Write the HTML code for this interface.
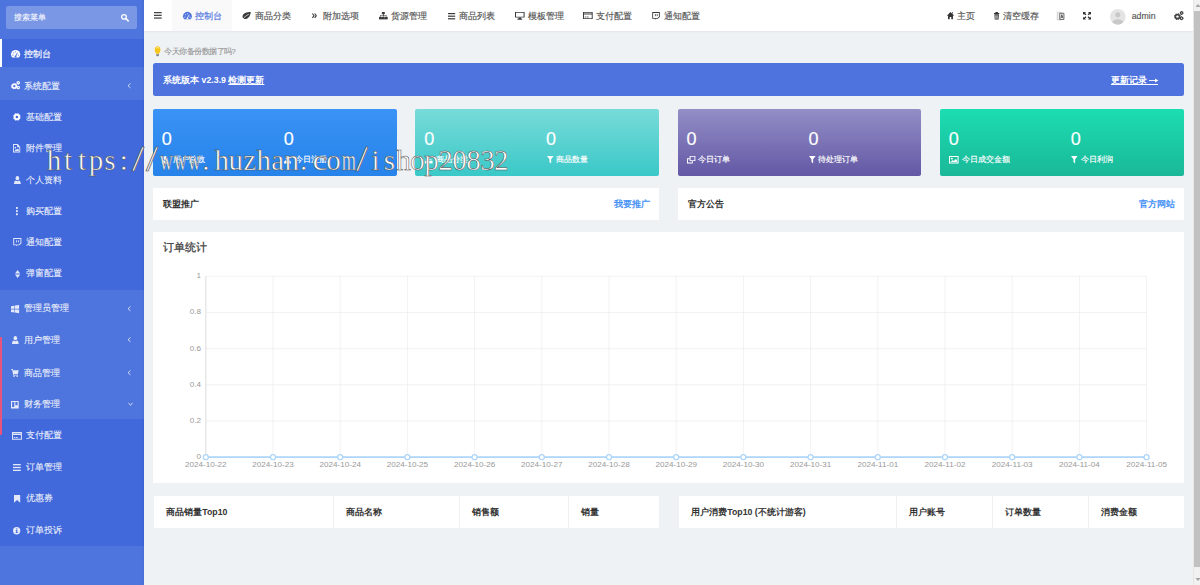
<!DOCTYPE html>
<html><head><meta charset="utf-8"><style>
*{margin:0;padding:0;box-sizing:border-box}
html,body{width:1200px;height:585px;overflow:hidden;background:#eff2f5;font-family:"Liberation Sans",sans-serif}
.a{position:absolute}
svg{display:block;overflow:visible}
.t{position:absolute;white-space:nowrap;line-height:12px}
</style></head><body>
<div class="a" style="left:0px;top:0px;width:143.75px;height:585px;background:#4e75dd"></div>
<div class="a" style="left:0px;top:39.2px;width:143.75px;height:28px;background:#4169db"></div>
<div class="a" style="left:0px;top:39.2px;width:2px;height:28px;background:#fff"></div>
<div class="a" style="left:0px;top:99.9px;width:143.75px;height:190.1px;background:#4169db"></div>
<div class="a" style="left:0px;top:418.9px;width:143.75px;height:127.3px;background:#4169db"></div>
<div class="a" style="left:142.3px;top:0px;width:1.45px;height:585px;background:rgba(30,50,140,0.07)"></div>
<div class="a" style="left:0px;top:336.7px;width:1.6px;height:98.8px;background:#e8547c;border-radius:0 1px 1px 0"></div>
<div class="a" style="left:5.7px;top:6.1px;width:131.3px;height:23.4px;background:rgba(255,255,255,0.25);border-radius:2px"></div>
<div class="t" style="left:14.4px;top:11.600000000000001px;font-size:8.1px;color:#eef2fc;font-weight:normal;-webkit-text-stroke:0.15px #eef2fc;">搜索菜单</div>
<svg class="a" style="left:120.7px;top:13.7px;color:#fff" width="8.0" height="7.6" viewBox="0.5 0.5 15.5 15.5" preserveAspectRatio="none" fill="#fff"><circle cx="6.3" cy="6.3" r="4.6" fill="none" stroke="currentColor" stroke-width="2.6"/><path d="M9.8 9.8 L14.5 14.5" stroke="currentColor" stroke-width="3" stroke-linecap="round"/></svg>
<svg class="a" style="left:10.5px;top:50.0px;color:#fff" width="9.2" height="7.4" viewBox="0 0.5 16 13.5" preserveAspectRatio="none" fill="#fff"><path d="M2.2 14 A8 8 0 1 1 13.8 14 Z"/><path d="M8 12 L11 5.5" stroke="#4169db" stroke-width="1.5" fill="none"/><circle cx="8" cy="12.2" r="1.6" fill="#4169db"/><circle cx="3.4" cy="9.8" r="1" fill="#4169db"/><circle cx="4.8" cy="5.6" r="1" fill="#4169db"/><circle cx="8" cy="3.8" r="1" fill="#4169db"/><circle cx="12.6" cy="9.8" r="1" fill="#4169db"/></svg>
<div class="t" style="left:23.8px;top:47.6px;font-size:8.75px;color:#fff;font-weight:normal;-webkit-text-stroke:0.15px #fff;">控制台</div>
<svg class="a" style="left:10.5px;top:81.3px;color:rgba(255,255,255,0.85)" width="9.2" height="8.4" viewBox="0 0.2 16.1 15.7" preserveAspectRatio="none" fill="rgba(255,255,255,0.85)"><polygon points="10.09,10.01 11.43,11.21 11.04,12.28 9.25,12.36 8.68,12.98 8.78,14.77 7.75,15.26 6.43,14.05 5.59,14.09 4.39,15.43 3.32,15.04 3.24,13.25 2.62,12.68 0.83,12.78 0.34,11.75 1.55,10.43 1.51,9.59 0.17,8.39 0.56,7.32 2.35,7.24 2.92,6.62 2.82,4.83 3.85,4.34 5.17,5.55 6.01,5.51 7.21,4.17 8.28,4.56 8.36,6.35 8.98,6.92 10.77,6.82 11.26,7.85 10.05,9.17"/><circle cx="5.8" cy="9.8" r="4.99"/><circle cx="5.8" cy="9.8" r="2.1" fill="#4e75dd"/><polygon points="15.21,3.76 15.92,4.69 15.53,5.49 14.36,5.49 13.81,5.86 13.36,6.93 12.48,6.99 11.89,5.98 11.30,5.69 10.14,5.84 9.65,5.10 10.23,4.09 10.19,3.44 9.48,2.51 9.87,1.71 11.04,1.71 11.59,1.34 12.04,0.27 12.92,0.21 13.51,1.22 14.10,1.51 15.26,1.36 15.75,2.10 15.17,3.11"/><circle cx="12.7" cy="3.6" r="2.92"/><circle cx="12.7" cy="3.6" r="1.0" fill="#4e75dd"/><polygon points="15.21,12.66 15.92,13.59 15.53,14.39 14.36,14.39 13.81,14.76 13.36,15.83 12.48,15.89 11.89,14.88 11.30,14.59 10.14,14.74 9.65,14.00 10.23,12.99 10.19,12.34 9.48,11.41 9.87,10.61 11.04,10.61 11.59,10.24 12.04,9.17 12.92,9.11 13.51,10.12 14.10,10.41 15.26,10.26 15.75,11.00 15.17,12.01"/><circle cx="12.7" cy="12.5" r="2.92"/><circle cx="12.7" cy="12.5" r="1.0" fill="#4e75dd"/></svg>
<div class="t" style="left:23.9px;top:79.5px;font-size:8.75px;color:rgba(255,255,255,0.85);font-weight:normal;-webkit-text-stroke:0.15px rgba(255,255,255,0.85);">系统配置</div>
<svg class="a" style="left:127.4px;top:82.8px;color:rgba(255,255,255,0.85)" width="4.0" height="5.4" viewBox="0 0 16 16" preserveAspectRatio="none" fill="rgba(255,255,255,0.85)"><path d="M14 1.5 L4 8 L14 14.5" stroke="currentColor" stroke-width="2.8" fill="none"/></svg>
<svg class="a" style="left:13.0px;top:113.1px;color:rgba(255,255,255,0.85)" width="7.8" height="7.8" viewBox="0 0 16 16" preserveAspectRatio="none" fill="rgba(255,255,255,0.85)"><polygon points="13.91,8.29 15.76,9.94 15.23,11.42 12.75,11.53 11.98,12.39 12.11,14.86 10.70,15.53 8.87,13.86 7.71,13.91 6.06,15.76 4.58,15.23 4.47,12.75 3.61,11.98 1.14,12.11 0.47,10.70 2.14,8.87 2.09,7.71 0.24,6.06 0.77,4.58 3.25,4.47 4.02,3.61 3.89,1.14 5.30,0.47 7.13,2.14 8.29,2.09 9.94,0.24 11.42,0.77 11.53,3.25 12.39,4.02 14.86,3.89 15.53,5.30 13.86,7.13"/><circle cx="8" cy="8" r="6.88"/><circle cx="8" cy="8" r="2.6" fill="#4169db"/></svg>
<div class="t" style="left:25.8px;top:110.6px;font-size:8.75px;color:rgba(255,255,255,0.85);font-weight:normal;-webkit-text-stroke:0.15px rgba(255,255,255,0.85);">基础配置</div>
<svg class="a" style="left:13.3px;top:144.0px;color:rgba(255,255,255,0.85)" width="7.2" height="8.5" viewBox="0 0 15 16" preserveAspectRatio="none" fill="rgba(255,255,255,0.85)"><path d="M0 0 H10 L15 5 V16 H0 Z M1.8 1.8 V14.2 H13.2 V6.3 H8.7 V1.8 Z" fill-rule="evenodd"/><circle cx="4.8" cy="7" r="1.6"/><path d="M3 13 L6.5 9.5 L8 11 L10 8.5 L12 10.5 V13 Z"/></svg>
<div class="t" style="left:25.8px;top:142.1px;font-size:8.75px;color:rgba(255,255,255,0.85);font-weight:normal;-webkit-text-stroke:0.15px rgba(255,255,255,0.85);">附件管理</div>
<svg class="a" style="left:13.5px;top:176.0px;color:rgba(255,255,255,0.85)" width="6.8" height="8.0" viewBox="0 0 16 16" preserveAspectRatio="none" fill="rgba(255,255,255,0.85)"><circle cx="8" cy="4.3" r="4.3"/><path d="M0 16 C0 11 2.5 9.2 4.5 9 Q8 11.5 11.5 9 C13.5 9.2 16 11 16 16 Z"/></svg>
<div class="t" style="left:25.8px;top:173.6px;font-size:8.75px;color:rgba(255,255,255,0.85);font-weight:normal;-webkit-text-stroke:0.15px rgba(255,255,255,0.85);">个人资料</div>
<svg class="a" style="left:16.2px;top:207.1px;color:rgba(255,255,255,0.85)" width="1.8" height="8.2" viewBox="0 0 4 16" preserveAspectRatio="none" fill="rgba(255,255,255,0.85)"><rect x="0" y="0" width="4" height="3.8"/><rect x="0" y="6.1" width="4" height="3.8"/><rect x="0" y="12.2" width="4" height="3.8"/></svg>
<div class="t" style="left:25.8px;top:204.79999999999998px;font-size:8.75px;color:rgba(255,255,255,0.85);font-weight:normal;-webkit-text-stroke:0.15px rgba(255,255,255,0.85);">购买配置</div>
<svg class="a" style="left:12.9px;top:237.7px;color:rgba(255,255,255,0.85)" width="8.4" height="8.3" viewBox="0 0 16 16" preserveAspectRatio="none" fill="rgba(255,255,255,0.85)"><path d="M0.5 0 H16 V10.5 L12 14 H8.5 L6 16 V14 H0.5 Z M2.3 1.8 V12.3 H7.3 V13.3 L8.3 12.3 H11.3 L14.2 9.8 V1.8 Z" fill-rule="evenodd"/><rect x="6" y="4.3" width="1.6" height="4.2"/><rect x="9.8" y="4.3" width="1.6" height="4.2"/></svg>
<div class="t" style="left:25.8px;top:236.2px;font-size:8.75px;color:rgba(255,255,255,0.85);font-weight:normal;-webkit-text-stroke:0.15px rgba(255,255,255,0.85);">通知配置</div>
<svg class="a" style="left:14.5px;top:269.8px;color:rgba(255,255,255,0.85)" width="5.2" height="8.0" viewBox="0 0 16 16" preserveAspectRatio="none" fill="rgba(255,255,255,0.85)"><path d="M8 0 L16 6.8 H0 Z M8 16 L16 9.2 H0 Z"/></svg>
<div class="t" style="left:25.8px;top:267.40000000000003px;font-size:8.75px;color:rgba(255,255,255,0.85);font-weight:normal;-webkit-text-stroke:0.15px rgba(255,255,255,0.85);">弹窗配置</div>
<svg class="a" style="left:11.1px;top:304.5px;color:rgba(255,255,255,0.85)" width="8.1" height="8.2" viewBox="0 0 16 16" preserveAspectRatio="none" fill="rgba(255,255,255,0.85)"><path d="M0 2.2 L6.6 1.3 V7.4 H0 Z M7.6 1.1 L16 0 V7.4 H7.6 Z M0 8.6 H6.6 V14.7 L0 13.8 Z M7.6 8.6 H16 V16 L7.6 14.9 Z"/></svg>
<div class="t" style="left:23.9px;top:302.2px;font-size:8.75px;color:rgba(255,255,255,0.85);font-weight:normal;-webkit-text-stroke:0.15px rgba(255,255,255,0.85);">管理员管理</div>
<svg class="a" style="left:127.4px;top:305.5px;color:rgba(255,255,255,0.85)" width="4.0" height="5.4" viewBox="0 0 16 16" preserveAspectRatio="none" fill="rgba(255,255,255,0.85)"><path d="M14 1.5 L4 8 L14 14.5" stroke="currentColor" stroke-width="2.8" fill="none"/></svg>
<svg class="a" style="left:11.8px;top:336.3px;color:rgba(255,255,255,0.85)" width="6.7" height="8.0" viewBox="0 0 16 16" preserveAspectRatio="none" fill="rgba(255,255,255,0.85)"><circle cx="8" cy="4.3" r="4.3"/><path d="M0 16 C0 11 2.5 9.2 4.5 9 Q8 11.5 11.5 9 C13.5 9.2 16 11 16 16 Z"/></svg>
<div class="t" style="left:23.9px;top:334.1px;font-size:8.75px;color:rgba(255,255,255,0.85);font-weight:normal;-webkit-text-stroke:0.15px rgba(255,255,255,0.85);">用户管理</div>
<svg class="a" style="left:127.4px;top:337.40000000000003px;color:rgba(255,255,255,0.85)" width="4.0" height="5.4" viewBox="0 0 16 16" preserveAspectRatio="none" fill="rgba(255,255,255,0.85)"><path d="M14 1.5 L4 8 L14 14.5" stroke="currentColor" stroke-width="2.8" fill="none"/></svg>
<svg class="a" style="left:11.1px;top:368.6px;color:rgba(255,255,255,0.85)" width="7.7" height="8.0" viewBox="0 0 16 16" preserveAspectRatio="none" fill="rgba(255,255,255,0.85)"><path d="M0 0 H3.8 L4.5 2.5 H16 L14.3 9.8 H5.8 L6.2 11.3 H14.3 V13 H4.9 L2.4 1.7 H0 Z"/><circle cx="6.2" cy="14.4" r="1.6"/><circle cx="12.8" cy="14.4" r="1.6"/></svg>
<div class="t" style="left:23.9px;top:366.5px;font-size:8.75px;color:rgba(255,255,255,0.85);font-weight:normal;-webkit-text-stroke:0.15px rgba(255,255,255,0.85);">商品管理</div>
<svg class="a" style="left:127.4px;top:369.8px;color:rgba(255,255,255,0.85)" width="4.0" height="5.4" viewBox="0 0 16 16" preserveAspectRatio="none" fill="rgba(255,255,255,0.85)"><path d="M14 1.5 L4 8 L14 14.5" stroke="currentColor" stroke-width="2.8" fill="none"/></svg>
<svg class="a" style="left:11.1px;top:400.5px;color:rgba(255,255,255,0.85)" width="7.7" height="7.5" viewBox="0 0 16 16" preserveAspectRatio="none" fill="rgba(255,255,255,0.85)"><path d="M0 0 H16 V16 H0 Z M2.3 2.3 V12.8 H6.9 V2.3 Z M9.1 2.3 V9 H13.7 V2.3 Z" fill-rule="evenodd"/></svg>
<div class="t" style="left:23.9px;top:398.2px;font-size:8.75px;color:rgba(255,255,255,0.85);font-weight:normal;-webkit-text-stroke:0.15px rgba(255,255,255,0.85);">财务管理</div>
<svg class="a" style="left:127.6px;top:402.09999999999997px;color:rgba(255,255,255,0.85)" width="5.0" height="4.2" viewBox="0 0 16 16" preserveAspectRatio="none" fill="rgba(255,255,255,0.85)"><path d="M1.5 3 L8 13 L14.5 3" stroke="currentColor" stroke-width="2.8" fill="none"/></svg>
<svg class="a" style="left:12.0px;top:432.0px;color:rgba(255,255,255,0.85)" width="9.9" height="7.8" viewBox="0 0 16 13" preserveAspectRatio="none" fill="rgba(255,255,255,0.85)"><path d="M0 0 H16 V13 H0 Z M1.6 4.8 V11.4 H14.4 V4.8 Z M1.6 1.6 V2.6 H14.4 V1.6 Z" fill-rule="evenodd"/><rect x="2.8" y="8.6" width="2.6" height="1.4"/><rect x="6.2" y="8.6" width="3.2" height="1.4"/></svg>
<div class="t" style="left:25.8px;top:429.40000000000003px;font-size:8.75px;color:rgba(255,255,255,0.85);font-weight:normal;-webkit-text-stroke:0.15px rgba(255,255,255,0.85);">支付配置</div>
<svg class="a" style="left:13.0px;top:463.9px;color:rgba(255,255,255,0.85)" width="7.8" height="7.0" viewBox="0 0 16 16" preserveAspectRatio="none" fill="rgba(255,255,255,0.85)"><rect x="0" y="0" width="16" height="3"/><rect x="0" y="6.5" width="16" height="3"/><rect x="0" y="13" width="16" height="3"/></svg>
<div class="t" style="left:25.8px;top:460.90000000000003px;font-size:8.75px;color:rgba(255,255,255,0.85);font-weight:normal;-webkit-text-stroke:0.15px rgba(255,255,255,0.85);">订单管理</div>
<svg class="a" style="left:13.8px;top:495.0px;color:rgba(255,255,255,0.85)" width="6.2" height="7.8" viewBox="0 0 16 16" preserveAspectRatio="none" fill="rgba(255,255,255,0.85)"><path d="M0 0 H16 V16 L8 10.5 L0 16 Z"/></svg>
<div class="t" style="left:25.8px;top:492.40000000000003px;font-size:8.75px;color:rgba(255,255,255,0.85);font-weight:normal;-webkit-text-stroke:0.15px rgba(255,255,255,0.85);">优惠券</div>
<svg class="a" style="left:13.0px;top:526.6px;color:rgba(255,255,255,0.85)" width="7.3" height="7.4" viewBox="0 0 16 16" preserveAspectRatio="none" fill="rgba(255,255,255,0.85)"><circle cx="8" cy="8" r="8"/><circle cx="8.3" cy="4" r="1.5" fill="#4169db"/><path d="M6.2 6.4 H9.5 V11.6 H10.6 V13.2 H5.9 V11.6 H7 V8 H6.2 Z" fill="#4169db"/></svg>
<div class="t" style="left:25.8px;top:524.0px;font-size:8.75px;color:rgba(255,255,255,0.85);font-weight:normal;-webkit-text-stroke:0.15px rgba(255,255,255,0.85);">订单投诉</div>
<div class="a" style="left:143.75px;top:0px;width:1050px;height:31.25px;background:#fff"></div>
<div class="a" style="left:143.75px;top:31.0px;width:1050px;height:2.2px;background:linear-gradient(#e3e6ea,#eff2f5)"></div>
<div class="a" style="left:172.0px;top:0px;width:59.6px;height:31.25px;background:#f9f9f9"></div>
<svg class="a" style="left:153.9px;top:12.2px;color:#444" width="7.7" height="6.7" viewBox="0 0 16 16" preserveAspectRatio="none" fill="#444"><rect x="0" y="0" width="16" height="3"/><rect x="0" y="6.5" width="16" height="3"/><rect x="0" y="13" width="16" height="3"/></svg>
<svg class="a" style="left:182.5px;top:12.2px;color:#4e73df" width="8.9" height="7.2" viewBox="0 0.5 16 13.5" preserveAspectRatio="none" fill="#4e73df"><path d="M2.2 14 A8 8 0 1 1 13.8 14 Z"/><path d="M8 12 L11 5.5" stroke="#f9f9f9" stroke-width="1.5" fill="none"/><circle cx="8" cy="12.2" r="1.6" fill="#f9f9f9"/><circle cx="3.4" cy="9.8" r="1" fill="#f9f9f9"/><circle cx="4.8" cy="5.6" r="1" fill="#f9f9f9"/><circle cx="8" cy="3.8" r="1" fill="#f9f9f9"/><circle cx="12.6" cy="9.8" r="1" fill="#f9f9f9"/></svg>
<div class="t" style="left:195.0px;top:10.0px;font-size:8.75px;color:#4e73df;font-weight:normal;-webkit-text-stroke:0.15px #4e73df;">控制台</div>
<svg class="a" style="left:242.0px;top:12.0px;color:#3a3a3a" width="8.8" height="7.8" viewBox="0 0 16 16" preserveAspectRatio="none" fill="#3a3a3a"><path d="M16 0 C9 0.5 1.5 1.5 1 9 C0.8 12 2.5 14 5 14.5 C12 14.5 15 8 16 0 Z"/><path d="M0.5 16 C3.5 11 7.5 7.5 12.5 4.5" stroke="#fff" stroke-width="1.4" fill="none"/></svg>
<div class="t" style="left:254.6px;top:10.0px;font-size:8.75px;color:#555;font-weight:normal;-webkit-text-stroke:0.15px #555;">商品分类</div>
<svg class="a" style="left:311.7px;top:12.8px;color:#3a3a3a" width="5.0" height="5.4" viewBox="0 0 16 16" preserveAspectRatio="none" fill="#3a3a3a"><path d="M1.2 1.5 L6.5 8 L1.2 14.5" stroke="currentColor" stroke-width="3.4" fill="none"/><path d="M8.5 1.5 L13.8 8 L8.5 14.5" stroke="currentColor" stroke-width="3.4" fill="none"/></svg>
<div class="t" style="left:322.8px;top:10.0px;font-size:8.75px;color:#555;font-weight:normal;-webkit-text-stroke:0.15px #555;">附加选项</div>
<svg class="a" style="left:378.8px;top:12.2px;color:#3a3a3a" width="8.7" height="7.4" viewBox="0 0 16 16" preserveAspectRatio="none" fill="#3a3a3a"><rect x="5.3" y="0" width="5.4" height="4.6"/><path d="M7.2 4.5 H8.8 V6.8 H14 V10 H12.4 V8.3 H8.8 V10 H7.2 V8.3 H3.6 V10 H2 V6.8 H7.2 Z"/><rect x="0" y="10.5" width="5.4" height="5.5"/><rect x="5.3" y="10.5" width="5.4" height="5.5"/><rect x="10.6" y="10.5" width="5.4" height="5.5"/></svg>
<div class="t" style="left:391.3px;top:10.0px;font-size:8.75px;color:#555;font-weight:normal;-webkit-text-stroke:0.15px #555;">货源管理</div>
<svg class="a" style="left:447.5px;top:12.6px;color:#3a3a3a" width="7.2" height="6.4" viewBox="0 0 16 16" preserveAspectRatio="none" fill="#3a3a3a"><rect x="0" y="0" width="16" height="3"/><rect x="0" y="6.5" width="16" height="3"/><rect x="0" y="13" width="16" height="3"/></svg>
<div class="t" style="left:459.2px;top:10.0px;font-size:8.75px;color:#555;font-weight:normal;-webkit-text-stroke:0.15px #555;">商品列表</div>
<svg class="a" style="left:514.9px;top:12.0px;color:#3a3a3a" width="9.6" height="7.8" viewBox="0 0 16 16" preserveAspectRatio="none" fill="#3a3a3a"><path d="M0 0 H16 V11.5 H0 Z M1.7 1.7 V9.6 H14.3 V1.7 Z" fill-rule="evenodd"/><path d="M6 11.5 H10 L10.4 14 H12 V16 H4 V14 H5.6 Z"/></svg>
<div class="t" style="left:528.0px;top:10.0px;font-size:8.75px;color:#555;font-weight:normal;-webkit-text-stroke:0.15px #555;">模板管理</div>
<svg class="a" style="left:583.1px;top:12.4px;color:#3a3a3a" width="9.7" height="7.0" viewBox="0 0 16 13" preserveAspectRatio="none" fill="#3a3a3a"><path d="M0 0 H16 V13 H0 Z M1.6 4.8 V11.4 H14.4 V4.8 Z M1.6 1.6 V2.6 H14.4 V1.6 Z" fill-rule="evenodd"/><rect x="2.8" y="8.6" width="2.6" height="1.4"/><rect x="6.2" y="8.6" width="3.2" height="1.4"/></svg>
<div class="t" style="left:595.9px;top:10.0px;font-size:8.75px;color:#555;font-weight:normal;-webkit-text-stroke:0.15px #555;">支付配置</div>
<svg class="a" style="left:652.3px;top:11.8px;color:#3a3a3a" width="7.8" height="7.8" viewBox="0 0 16 16" preserveAspectRatio="none" fill="#3a3a3a"><path d="M0.5 0 H16 V10.5 L12 14 H8.5 L6 16 V14 H0.5 Z M2.3 1.8 V12.3 H7.3 V13.3 L8.3 12.3 H11.3 L14.2 9.8 V1.8 Z" fill-rule="evenodd"/><rect x="6" y="4.3" width="1.6" height="4.2"/><rect x="9.8" y="4.3" width="1.6" height="4.2"/></svg>
<div class="t" style="left:663.6px;top:10.0px;font-size:8.75px;color:#555;font-weight:normal;-webkit-text-stroke:0.15px #555;">通知配置</div>
<svg class="a" style="left:947.0px;top:12.0px;color:#333" width="7.0" height="7.3" viewBox="0 0.5 16 15.5" preserveAspectRatio="none" fill="#333"><path d="M8 0.5 L16 7.7 L15 8.9 L13.6 7.6 V16 H9.8 V11 H6.2 V16 H2.4 V7.6 L1 8.9 L0 7.7 Z M11.6 1 H13.6 V4.6 L11.6 2.8 Z"/></svg>
<div class="t" style="left:957.0px;top:10.0px;font-size:8.75px;color:#555;font-weight:normal;-webkit-text-stroke:0.15px #555;">主页</div>
<svg class="a" style="left:994.0px;top:12.0px;color:#333" width="5.3" height="7.5" viewBox="0 0 16 16" preserveAspectRatio="none" fill="#333"><path d="M4.5 0 H11.5 L12 2 H16 V4 H0 V2 H4 Z"/><path d="M1.3 5 H14.7 L13.8 16 H2.2 Z M4.3 6.8 V14.2 H5.8 V6.8 Z M7.25 6.8 V14.2 H8.75 V6.8 Z M10.2 6.8 V14.2 H11.7 V6.8 Z" fill-rule="evenodd"/></svg>
<div class="t" style="left:1002.7px;top:10.0px;font-size:8.75px;color:#555;font-weight:normal;-webkit-text-stroke:0.15px #555;">清空缓存</div>
<svg class="a" style="left:1057.3px;top:11.6px;color:#333" width="7.4" height="8.2" viewBox="0 0 16 16" preserveAspectRatio="none" fill="#333"><path d="M0.5 0.5 H9 V15.5 H0.5 Z" fill="#f0f0f0" stroke="#aaa" stroke-width="1"/><path d="M6 2.5 H15 V14.5 H6 Z" fill="#fff" stroke="#333" stroke-width="1.5"/><path d="M8.4 12 L10.5 5 L12.6 12 M9 9.8 H12" stroke="#333" stroke-width="1.5" fill="none"/></svg>
<svg class="a" style="left:1082.7px;top:12.0px;color:#333" width="8.0" height="7.6" viewBox="0 0 16 16" preserveAspectRatio="none" fill="#333"><path d="M0 0 H6 L4 2 L6.8 4.8 L4.8 6.8 L2 4 L0 6 Z"/><path d="M16 0 V6 L14 4 L11.2 6.8 L9.2 4.8 L12 2 L10 0 Z"/><path d="M0 16 V10 L2 12 L4.8 9.2 L6.8 11.2 L4 14 L6 16 Z"/><path d="M16 16 H10 L12 14 L9.2 11.2 L11.2 9.2 L14 12 L16 10 Z"/></svg>
<svg class="a" style="left:1109.7px;top:9px" width="15.6" height="15.6" viewBox="0 0 16 16"><circle cx="8" cy="8" r="8" fill="#e4e4e4"/><circle cx="8" cy="6" r="2.6" fill="#c8c8c8"/><path d="M2.3 13.7 C3.3 11.4 5.5 10.4 8 10.4 C10.5 10.4 12.7 11.4 13.7 13.7 A8 8 0 0 1 2.3 13.7 Z" fill="#c8c8c8"/></svg>
<div class="t" style="left:1131.7px;top:10.0px;font-size:8.75px;color:#555;font-weight:normal;-webkit-text-stroke:0.15px #555;">admin</div>
<svg class="a" style="left:1174.4px;top:11.4px;color:#444" width="9.6" height="9.2" viewBox="0 0.2 16.1 15.7" preserveAspectRatio="none" fill="#444"><polygon points="10.09,10.01 11.43,11.21 11.04,12.28 9.25,12.36 8.68,12.98 8.78,14.77 7.75,15.26 6.43,14.05 5.59,14.09 4.39,15.43 3.32,15.04 3.24,13.25 2.62,12.68 0.83,12.78 0.34,11.75 1.55,10.43 1.51,9.59 0.17,8.39 0.56,7.32 2.35,7.24 2.92,6.62 2.82,4.83 3.85,4.34 5.17,5.55 6.01,5.51 7.21,4.17 8.28,4.56 8.36,6.35 8.98,6.92 10.77,6.82 11.26,7.85 10.05,9.17"/><circle cx="5.8" cy="9.8" r="4.99"/><circle cx="5.8" cy="9.8" r="2.1" fill="#fff"/><polygon points="15.21,3.76 15.92,4.69 15.53,5.49 14.36,5.49 13.81,5.86 13.36,6.93 12.48,6.99 11.89,5.98 11.30,5.69 10.14,5.84 9.65,5.10 10.23,4.09 10.19,3.44 9.48,2.51 9.87,1.71 11.04,1.71 11.59,1.34 12.04,0.27 12.92,0.21 13.51,1.22 14.10,1.51 15.26,1.36 15.75,2.10 15.17,3.11"/><circle cx="12.7" cy="3.6" r="2.92"/><circle cx="12.7" cy="3.6" r="1.0" fill="#fff"/><polygon points="15.21,12.66 15.92,13.59 15.53,14.39 14.36,14.39 13.81,14.76 13.36,15.83 12.48,15.89 11.89,14.88 11.30,14.59 10.14,14.74 9.65,14.00 10.23,12.99 10.19,12.34 9.48,11.41 9.87,10.61 11.04,10.61 11.59,10.24 12.04,9.17 12.92,9.11 13.51,10.12 14.10,10.41 15.26,10.26 15.75,11.00 15.17,12.01"/><circle cx="12.7" cy="12.5" r="2.92"/><circle cx="12.7" cy="12.5" r="1.0" fill="#fff"/></svg>
<svg class="a" style="left:154.4px;top:45.5px;color:#f5c518" width="7.2" height="10.2" viewBox="0 0 16 16.5" preserveAspectRatio="none" fill="#f5c518"><path d="M8 0.3 C4 0.3 1.5 3 1.5 6 C1.5 9 4 10.5 4.6 12.4 H11.4 C12 10.5 14.5 9 14.5 6 C14.5 3 12 0.3 8 0.3 Z" fill="#f5c518"/><path d="M4.8 3.6 C6.5 2.3 9.5 2.3 11.2 3.6" stroke="#fff7c0" stroke-width="1.6" fill="none"/><path d="M4.8 12.8 H11.2 V14.2 H4.8 Z M5.2 14.5 H10.8 V15.4 L9.3 16.5 H6.7 L5.2 15.4 Z" fill="#7a7a7a"/></svg>
<div class="t" style="left:164.4px;top:45.0px;font-size:15px;line-height:24px;color:#9a9a9a;-webkit-text-stroke:0.3px #9a9a9a;transform:scale(0.5);transform-origin:0 0">今天你备份数据了吗?</div>
<div class="a" style="left:153.1px;top:62.8px;width:1030.7px;height:33.6px;background:#4e73df;border-radius:2.5px"></div>
<div class="t" style="left:163.2px;top:74.0px;font-size:8.75px;color:#fff;font-weight:bold;">系统版本 v2.3.9 <u>检测更新</u></div>
<div class="t" style="left:1110.8px;top:74.0px;font-size:8.75px;color:#fff;font-weight:bold;">更新记录</div>
<div class="a" style="left:1110.8px;top:83.7px;width:46.8px;height:0.8px;background:#fff"></div>
<svg class="a" style="left:1149px;top:78.1px" width="9.4" height="5" viewBox="0 0 9.4 5"><path d="M0 2.5 H8" stroke="#fff" stroke-width="0.9"/><path d="M6 0.4 L9.4 2.5 L6 4.6 Z" fill="#fff"/></svg>
<div class="a" style="left:153.1px;top:108.55px;width:243.6px;height:67.5px;background:linear-gradient(#3a93f5,#2683ea);border-radius:2px"></div>
<div class="t" style="left:161.79999999999998px;top:128.9px;font-size:18px;color:#fff;font-weight:normal;-webkit-text-stroke:0.15px #fff;line-height:20px">0</div>
<svg class="a" style="left:162.29999999999998px;top:155.6px;color:#fff" width="6.5" height="7.4" viewBox="0 0 16 16" preserveAspectRatio="none" fill="#fff"><circle cx="8" cy="4.3" r="4.3"/><path d="M0 16 C0 11 2.5 9.2 4.5 9 Q8 11.5 11.5 9 C13.5 9.2 16 11 16 16 Z"/></svg>
<div class="t" style="left:173.1px;top:153.6px;font-size:8.1px;color:#fff;font-weight:normal;-webkit-text-stroke:0.15px #fff;">用户总数</div>
<div class="t" style="left:283.7px;top:128.9px;font-size:18px;color:#fff;font-weight:normal;-webkit-text-stroke:0.15px #fff;line-height:20px">0</div>
<svg class="a" style="left:284.2px;top:155.6px;color:#fff" width="7.0" height="7.4" viewBox="0 0 16 16" preserveAspectRatio="none" fill="#fff"><circle cx="8" cy="4.3" r="4.3"/><path d="M0 16 C0 11 2.5 9.2 4.5 9 Q8 11.5 11.5 9 C13.5 9.2 16 11 16 16 Z"/></svg>
<div class="t" style="left:295.0px;top:153.6px;font-size:8.1px;color:#fff;font-weight:normal;-webkit-text-stroke:0.15px #fff;">今日注册</div>
<div class="a" style="left:415.45px;top:108.55px;width:243.6px;height:67.5px;background:linear-gradient(#78dbd9,#3ac8c8);border-radius:2px"></div>
<div class="t" style="left:424.15px;top:128.9px;font-size:18px;color:#fff;font-weight:normal;-webkit-text-stroke:0.15px #fff;line-height:20px">0</div>
<svg class="a" style="left:424.65px;top:155.6px;color:#fff" width="7.6" height="7.4" viewBox="0 0 16 16" preserveAspectRatio="none" fill="#fff"><rect x="5.3" y="0" width="5.4" height="4.6"/><path d="M7.2 4.5 H8.8 V6.8 H14 V10 H12.4 V8.3 H8.8 V10 H7.2 V8.3 H3.6 V10 H2 V6.8 H7.2 Z"/><rect x="0" y="10.5" width="5.4" height="5.5"/><rect x="5.3" y="10.5" width="5.4" height="5.5"/><rect x="10.6" y="10.5" width="5.4" height="5.5"/></svg>
<div class="t" style="left:435.95px;top:153.6px;font-size:8.1px;color:#fff;font-weight:normal;-webkit-text-stroke:0.15px #fff;">商品分类</div>
<div class="t" style="left:546.0500000000001px;top:128.9px;font-size:18px;color:#fff;font-weight:normal;-webkit-text-stroke:0.15px #fff;line-height:20px">0</div>
<svg class="a" style="left:546.5500000000001px;top:155.6px;color:#fff" width="6.6" height="7.4" viewBox="0 0 16 16" preserveAspectRatio="none" fill="#fff"><path d="M0 0 H16 L10 7 V16 L6 13 V7 Z"/></svg>
<div class="t" style="left:556.15px;top:153.6px;font-size:8.1px;color:#fff;font-weight:normal;-webkit-text-stroke:0.15px #fff;">商品数量</div>
<div class="a" style="left:677.8px;top:108.55px;width:243.6px;height:67.5px;background:linear-gradient(#928ec6,#6358a5);border-radius:2px"></div>
<div class="t" style="left:686.5px;top:128.9px;font-size:18px;color:#fff;font-weight:normal;-webkit-text-stroke:0.15px #fff;line-height:20px">0</div>
<svg class="a" style="left:687.0px;top:155.6px;color:#fff" width="8.4" height="7.4" viewBox="0 0 16 16" preserveAspectRatio="none" fill="#fff"><path d="M5 0 H16 V11 H11 V16 H0 V5 H5 Z M6.8 1.8 V9.2 H14.2 V1.8 Z M1.8 6.8 V14.2 H9.2 V11 H5 V6.8 Z" fill-rule="evenodd"/></svg>
<div class="t" style="left:698.25px;top:153.6px;font-size:8.1px;color:#fff;font-weight:normal;-webkit-text-stroke:0.15px #fff;">今日订单</div>
<div class="t" style="left:808.4px;top:128.9px;font-size:18px;color:#fff;font-weight:normal;-webkit-text-stroke:0.15px #fff;line-height:20px">0</div>
<svg class="a" style="left:808.9px;top:155.6px;color:#fff" width="6.6" height="7.4" viewBox="0 0 16 16" preserveAspectRatio="none" fill="#fff"><path d="M0 0 H16 L10 7 V16 L6 13 V7 Z"/></svg>
<div class="t" style="left:818.3px;top:153.6px;font-size:8.1px;color:#fff;font-weight:normal;-webkit-text-stroke:0.15px #fff;">待处理订单</div>
<div class="a" style="left:940.15px;top:108.55px;width:243.6px;height:67.5px;background:linear-gradient(#1cddb2,#1ab899);border-radius:2px"></div>
<div class="t" style="left:948.85px;top:128.9px;font-size:18px;color:#fff;font-weight:normal;-webkit-text-stroke:0.15px #fff;line-height:20px">0</div>
<svg class="a" style="left:949.35px;top:155.6px;color:#fff" width="9.6" height="7.4" viewBox="0 0 16 14" preserveAspectRatio="none" fill="#fff"><path d="M0 0 H16 V14 H0 Z M1.7 1.7 V12.3 H14.3 V1.7 Z" fill-rule="evenodd"/><circle cx="4.8" cy="4.8" r="1.7"/><path d="M2.6 11.5 L6.3 7.8 L8 9.5 L11.2 5.5 L13.4 8 V11.5 Z"/></svg>
<div class="t" style="left:962.0px;top:153.6px;font-size:8.1px;color:#fff;font-weight:normal;-webkit-text-stroke:0.15px #fff;">今日成交金额</div>
<div class="t" style="left:1070.75px;top:128.9px;font-size:18px;color:#fff;font-weight:normal;-webkit-text-stroke:0.15px #fff;line-height:20px">0</div>
<svg class="a" style="left:1071.25px;top:155.6px;color:#fff" width="6.6" height="7.4" viewBox="0 0 16 16" preserveAspectRatio="none" fill="#fff"><path d="M0 0 H16 L10 7 V16 L6 13 V7 Z"/></svg>
<div class="t" style="left:1081.0px;top:153.6px;font-size:8.1px;color:#fff;font-weight:normal;-webkit-text-stroke:0.15px #fff;">今日利润</div>
<div class="a" style="left:153.125px;top:188.2px;width:506.25px;height:31.4px;background:#fff"></div>
<div class="t" style="left:163.025px;top:198.0px;font-size:8.75px;color:#333;font-weight:bold;">联盟推广</div>
<div class="t" style="left:153.125px;width:496.65px;text-align:right;top:198.0px;font-size:8.75px;color:#3a8cf6;-webkit-text-stroke:0.3px #3a8cf6">我要推广</div>
<div class="a" style="left:678.125px;top:188.2px;width:506.25px;height:31.4px;background:#fff"></div>
<div class="t" style="left:688.025px;top:198.0px;font-size:8.75px;color:#333;font-weight:bold;">官方公告</div>
<div class="t" style="left:678.125px;width:496.65px;text-align:right;top:198.0px;font-size:8.75px;color:#3a8cf6;-webkit-text-stroke:0.3px #3a8cf6">官方网站</div>
<div class="a" style="left:153.125px;top:231.9px;width:1031.25px;height:251.4px;background:#fff"></div>
<div class="t" style="left:162.5px;top:239.60000000000002px;font-size:11.25px;color:#444;font-weight:normal;-webkit-text-stroke:0.3px #444;line-height:14px">订单统计</div>
<svg class="a" style="left:0;top:0" width="1200" height="585"><line x1="205.8" y1="276.30" x2="1146.6" y2="276.30" stroke="#ececec" stroke-width="0.7"/><line x1="205.8" y1="312.48" x2="1146.6" y2="312.48" stroke="#ececec" stroke-width="0.7"/><line x1="205.8" y1="348.66" x2="1146.6" y2="348.66" stroke="#ececec" stroke-width="0.7"/><line x1="205.8" y1="384.84" x2="1146.6" y2="384.84" stroke="#ececec" stroke-width="0.7"/><line x1="205.8" y1="421.02" x2="1146.6" y2="421.02" stroke="#ececec" stroke-width="0.7"/><line x1="205.8" y1="457.20" x2="1146.6" y2="457.20" stroke="#ececec" stroke-width="0.7"/><line x1="205.80" y1="276.3" x2="205.80" y2="457.2" stroke="#ececec" stroke-width="0.7"/><line x1="273.00" y1="276.3" x2="273.00" y2="457.2" stroke="#ececec" stroke-width="0.7"/><line x1="340.20" y1="276.3" x2="340.20" y2="457.2" stroke="#ececec" stroke-width="0.7"/><line x1="407.40" y1="276.3" x2="407.40" y2="457.2" stroke="#ececec" stroke-width="0.7"/><line x1="474.60" y1="276.3" x2="474.60" y2="457.2" stroke="#ececec" stroke-width="0.7"/><line x1="541.80" y1="276.3" x2="541.80" y2="457.2" stroke="#ececec" stroke-width="0.7"/><line x1="609.00" y1="276.3" x2="609.00" y2="457.2" stroke="#ececec" stroke-width="0.7"/><line x1="676.20" y1="276.3" x2="676.20" y2="457.2" stroke="#ececec" stroke-width="0.7"/><line x1="743.40" y1="276.3" x2="743.40" y2="457.2" stroke="#ececec" stroke-width="0.7"/><line x1="810.60" y1="276.3" x2="810.60" y2="457.2" stroke="#ececec" stroke-width="0.7"/><line x1="877.80" y1="276.3" x2="877.80" y2="457.2" stroke="#ececec" stroke-width="0.7"/><line x1="945.00" y1="276.3" x2="945.00" y2="457.2" stroke="#ececec" stroke-width="0.7"/><line x1="1012.20" y1="276.3" x2="1012.20" y2="457.2" stroke="#ececec" stroke-width="0.7"/><line x1="1079.40" y1="276.3" x2="1079.40" y2="457.2" stroke="#ececec" stroke-width="0.7"/><line x1="1146.60" y1="276.3" x2="1146.60" y2="457.2" stroke="#ececec" stroke-width="0.7"/><line x1="205.8" y1="276.3" x2="205.8" y2="457.2" stroke="#dcdcdc" stroke-width="0.8"/><line x1="205.8" y1="457.2" x2="1146.6" y2="457.2" stroke="#afd6f9" stroke-width="1.7"/><circle cx="205.80" cy="457.2" r="2.5" fill="#fff" stroke="#afd6f9" stroke-width="1.3"/><circle cx="273.00" cy="457.2" r="2.5" fill="#fff" stroke="#afd6f9" stroke-width="1.3"/><circle cx="340.20" cy="457.2" r="2.5" fill="#fff" stroke="#afd6f9" stroke-width="1.3"/><circle cx="407.40" cy="457.2" r="2.5" fill="#fff" stroke="#afd6f9" stroke-width="1.3"/><circle cx="474.60" cy="457.2" r="2.5" fill="#fff" stroke="#afd6f9" stroke-width="1.3"/><circle cx="541.80" cy="457.2" r="2.5" fill="#fff" stroke="#afd6f9" stroke-width="1.3"/><circle cx="609.00" cy="457.2" r="2.5" fill="#fff" stroke="#afd6f9" stroke-width="1.3"/><circle cx="676.20" cy="457.2" r="2.5" fill="#fff" stroke="#afd6f9" stroke-width="1.3"/><circle cx="743.40" cy="457.2" r="2.5" fill="#fff" stroke="#afd6f9" stroke-width="1.3"/><circle cx="810.60" cy="457.2" r="2.5" fill="#fff" stroke="#afd6f9" stroke-width="1.3"/><circle cx="877.80" cy="457.2" r="2.5" fill="#fff" stroke="#afd6f9" stroke-width="1.3"/><circle cx="945.00" cy="457.2" r="2.5" fill="#fff" stroke="#afd6f9" stroke-width="1.3"/><circle cx="1012.20" cy="457.2" r="2.5" fill="#fff" stroke="#afd6f9" stroke-width="1.3"/><circle cx="1079.40" cy="457.2" r="2.5" fill="#fff" stroke="#afd6f9" stroke-width="1.3"/><circle cx="1146.60" cy="457.2" r="2.5" fill="#fff" stroke="#afd6f9" stroke-width="1.3"/></svg>
<div class="t" style="left:161.0px;width:40px;text-align:right;top:271.3px;font-size:8.1px;color:#999;line-height:10px">1</div>
<div class="t" style="left:161.0px;width:40px;text-align:right;top:307.48px;font-size:8.1px;color:#999;line-height:10px">0.8</div>
<div class="t" style="left:161.0px;width:40px;text-align:right;top:343.65999999999997px;font-size:8.1px;color:#999;line-height:10px">0.6</div>
<div class="t" style="left:161.0px;width:40px;text-align:right;top:379.84000000000003px;font-size:8.1px;color:#999;line-height:10px">0.4</div>
<div class="t" style="left:161.0px;width:40px;text-align:right;top:416.02px;font-size:8.1px;color:#999;line-height:10px">0.2</div>
<div class="t" style="left:161.0px;width:40px;text-align:right;top:452.2px;font-size:8.1px;color:#999;line-height:10px">0</div>
<div class="t" style="left:175.80px;width:60px;text-align:center;top:459.9px;font-size:8.1px;color:#999;line-height:10px">2024-10-22</div>
<div class="t" style="left:243.00px;width:60px;text-align:center;top:459.9px;font-size:8.1px;color:#999;line-height:10px">2024-10-23</div>
<div class="t" style="left:310.20px;width:60px;text-align:center;top:459.9px;font-size:8.1px;color:#999;line-height:10px">2024-10-24</div>
<div class="t" style="left:377.40px;width:60px;text-align:center;top:459.9px;font-size:8.1px;color:#999;line-height:10px">2024-10-25</div>
<div class="t" style="left:444.60px;width:60px;text-align:center;top:459.9px;font-size:8.1px;color:#999;line-height:10px">2024-10-26</div>
<div class="t" style="left:511.80px;width:60px;text-align:center;top:459.9px;font-size:8.1px;color:#999;line-height:10px">2024-10-27</div>
<div class="t" style="left:579.00px;width:60px;text-align:center;top:459.9px;font-size:8.1px;color:#999;line-height:10px">2024-10-28</div>
<div class="t" style="left:646.20px;width:60px;text-align:center;top:459.9px;font-size:8.1px;color:#999;line-height:10px">2024-10-29</div>
<div class="t" style="left:713.40px;width:60px;text-align:center;top:459.9px;font-size:8.1px;color:#999;line-height:10px">2024-10-30</div>
<div class="t" style="left:780.60px;width:60px;text-align:center;top:459.9px;font-size:8.1px;color:#999;line-height:10px">2024-10-31</div>
<div class="t" style="left:847.80px;width:60px;text-align:center;top:459.9px;font-size:8.1px;color:#999;line-height:10px">2024-11-01</div>
<div class="t" style="left:915.00px;width:60px;text-align:center;top:459.9px;font-size:8.1px;color:#999;line-height:10px">2024-11-02</div>
<div class="t" style="left:982.20px;width:60px;text-align:center;top:459.9px;font-size:8.1px;color:#999;line-height:10px">2024-11-03</div>
<div class="t" style="left:1049.40px;width:60px;text-align:center;top:459.9px;font-size:8.1px;color:#999;line-height:10px">2024-11-04</div>
<div class="t" style="left:1116.60px;width:60px;text-align:center;top:459.9px;font-size:8.1px;color:#999;line-height:10px">2024-11-05</div>
<div class="a" style="left:153.75px;top:496.25px;width:505.65px;height:31.25px;background:#fff"></div>
<div class="a" style="left:332.5px;top:496.25px;width:0.6px;height:31.25px;background:#eef0f3"></div>
<div class="a" style="left:459.25px;top:496.25px;width:0.6px;height:31.25px;background:#eef0f3"></div>
<div class="a" style="left:568.25px;top:496.25px;width:0.6px;height:31.25px;background:#eef0f3"></div>
<div class="t" style="left:166.25px;top:506.0px;font-size:8.75px;color:#333;font-weight:bold;">商品销量Top10</div>
<div class="t" style="left:345.6px;top:506.0px;font-size:8.75px;color:#333;font-weight:bold;">商品名称</div>
<div class="t" style="left:472.35px;top:506.0px;font-size:8.75px;color:#333;font-weight:bold;">销售额</div>
<div class="t" style="left:581.35px;top:506.0px;font-size:8.75px;color:#333;font-weight:bold;">销量</div>
<div class="a" style="left:678.75px;top:496.25px;width:505.25px;height:31.25px;background:#fff"></div>
<div class="a" style="left:895.5px;top:496.25px;width:0.6px;height:31.25px;background:#eef0f3"></div>
<div class="a" style="left:991.75px;top:496.25px;width:0.6px;height:31.25px;background:#eef0f3"></div>
<div class="a" style="left:1087.5px;top:496.25px;width:0.6px;height:31.25px;background:#eef0f3"></div>
<div class="t" style="left:691.25px;top:506.0px;font-size:8.75px;color:#333;font-weight:bold;">用户消费Top10 (不统计游客)</div>
<div class="t" style="left:908.6px;top:506.0px;font-size:8.75px;color:#333;font-weight:bold;">用户账号</div>
<div class="t" style="left:1004.85px;top:506.0px;font-size:8.75px;color:#333;font-weight:bold;">订单数量</div>
<div class="t" style="left:1100.6px;top:506.0px;font-size:8.75px;color:#333;font-weight:bold;">消费金额</div>
<div class="a" style="left:1193.4px;top:0px;width:6.6px;height:585px;background:#f1f1f1;border-left:0.5px solid #e6e6e6"></div>
<div class="a" style="left:1194.2px;top:10.8px;width:5.8px;height:556.2px;background:#c1c1c1"></div>
<svg class="a" style="left:1195px;top:3px" width="6" height="5" viewBox="0 0 6 5"><path d="M3 1 L5.5 4 H0.5 Z" fill="#a3a3a3"/></svg>
<svg class="a" style="left:1195px;top:577px" width="6" height="5" viewBox="0 0 6 5"><path d="M3 4 L5.5 1 H0.5 Z" fill="#a3a3a3"/></svg>
<div class="a" style="left:0;top:145.0px;font-family:'Liberation Serif',serif;font-size:29px;line-height:30px;color:#fff;-webkit-text-stroke:0.5px #4a4a4a;white-space:nowrap"><span style="position:absolute;left:44.00px;width:20px;text-align:center;">h</span><span style="position:absolute;left:57.98px;width:20px;text-align:center;">t</span><span style="position:absolute;left:71.96px;width:20px;text-align:center;">t</span><span style="position:absolute;left:85.94px;width:20px;text-align:center;">p</span><span style="position:absolute;left:99.92px;width:20px;text-align:center;">s</span><span style="position:absolute;left:113.90px;width:20px;text-align:center;">:</span><span style="position:absolute;left:127.88px;width:20px;text-align:center;transform:scale(1.5,1.2);transform-origin:50% 75%;">/</span><span style="position:absolute;left:141.86px;width:20px;text-align:center;transform:scale(1.5,1.2);transform-origin:50% 75%;">/</span><span style="position:absolute;left:155.84px;width:20px;text-align:center;transform:scaleX(0.62);transform-origin:50% 75%;">w</span><span style="position:absolute;left:169.82px;width:20px;text-align:center;transform:scaleX(0.62);transform-origin:50% 75%;">w</span><span style="position:absolute;left:183.80px;width:20px;text-align:center;transform:scaleX(0.62);transform-origin:50% 75%;">w</span><span style="position:absolute;left:197.78px;width:20px;text-align:center;transform:translateX(-2px);transform-origin:50% 75%;">.</span><span style="position:absolute;left:211.76px;width:20px;text-align:center;">h</span><span style="position:absolute;left:225.74px;width:20px;text-align:center;">u</span><span style="position:absolute;left:239.72px;width:20px;text-align:center;">z</span><span style="position:absolute;left:253.70px;width:20px;text-align:center;">h</span><span style="position:absolute;left:267.68px;width:20px;text-align:center;">a</span><span style="position:absolute;left:281.66px;width:20px;text-align:center;">n</span><span style="position:absolute;left:295.64px;width:20px;text-align:center;transform:translateX(-2px);transform-origin:50% 75%;">.</span><span style="position:absolute;left:309.62px;width:20px;text-align:center;transform:scaleX(1.15);transform-origin:50% 75%;">c</span><span style="position:absolute;left:323.60px;width:20px;text-align:center;">o</span><span style="position:absolute;left:337.58px;width:20px;text-align:center;transform:scaleX(0.63);transform-origin:50% 75%;">m</span><span style="position:absolute;left:351.56px;width:20px;text-align:center;transform:scale(1.5,1.2);transform-origin:50% 75%;">/</span><span style="position:absolute;left:365.54px;width:20px;text-align:center;">i</span><span style="position:absolute;left:379.52px;width:20px;text-align:center;">s</span><span style="position:absolute;left:393.50px;width:20px;text-align:center;">h</span><span style="position:absolute;left:407.48px;width:20px;text-align:center;">o</span><span style="position:absolute;left:421.46px;width:20px;text-align:center;">p</span><span style="position:absolute;left:435.44px;width:20px;text-align:center;">2</span><span style="position:absolute;left:449.42px;width:20px;text-align:center;">0</span><span style="position:absolute;left:463.40px;width:20px;text-align:center;">8</span><span style="position:absolute;left:477.38px;width:20px;text-align:center;">3</span><span style="position:absolute;left:491.36px;width:20px;text-align:center;">2</span></div>
</body></html>
